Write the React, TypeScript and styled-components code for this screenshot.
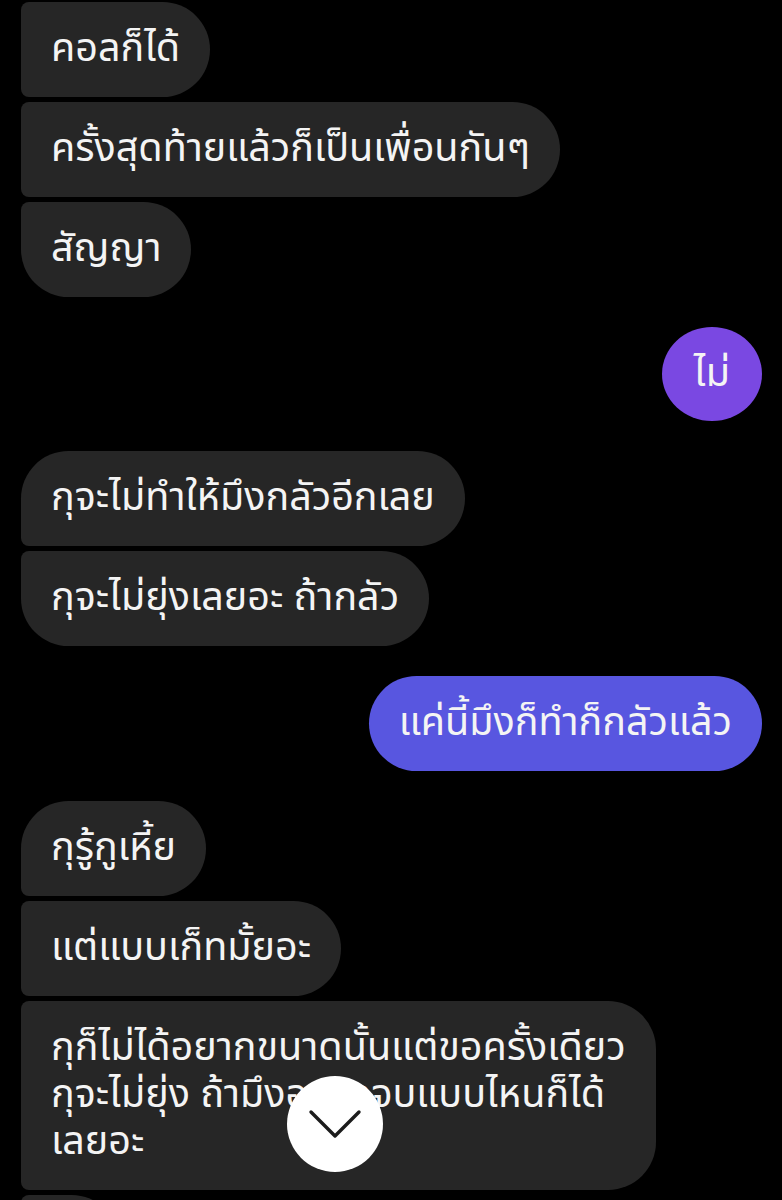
import React from "react";
import styled, { createGlobalStyle, css } from "styled-components";

const Global = createGlobalStyle`
  html, body {
    margin: 0;
    padding: 0;
    background: #000;
    overflow: hidden;
  }
  body {
    font-family: "Noto Sans Thai", "Noto Sans", "DejaVu Sans", sans-serif;
  }
`;

const Screen = styled.div`
  position: relative;
  width: 782px;
  height: 1200px;
  background: #000;
  overflow: hidden;
`;

const Thread = styled.div`
  display: flex;
  flex-direction: column;
  gap: 30px;
  padding: 2px 20px 0 21px;
`;

const Group = styled.div<{ $side: "in" | "out" }>`
  display: flex;
  flex-direction: column;
  gap: 5px;
  align-items: ${(p) => (p.$side === "in" ? "flex-start" : "flex-end")};
`;

type Pos = "first" | "middle" | "last" | "single";

const BIG = 48;
const SMALL = 8;

const Bubble = styled.div<{ $side: "in" | "out"; $pos: Pos; $bg: string }>`
  box-sizing: border-box;
  min-width: 95px;
  max-width: 700px;
  padding: 24px 30px;
  font-size: 39.5px;
  line-height: 47px;
  color: #f4f4f4;
  background: ${(p) => p.$bg};
  white-space: pre-line;
  text-align: left;
  ${(p) => {
    const top = p.$pos === "first" || p.$pos === "single" ? BIG : SMALL;
    const bottom = p.$pos === "last" || p.$pos === "single" ? BIG : SMALL;
    return p.$side === "in"
      ? css`
          border-radius: ${top}px ${BIG}px ${BIG}px ${bottom}px;
        `
      : css`
          border-radius: ${BIG}px ${top}px ${bottom}px ${BIG}px;
        `;
  }}
`;

const RoundBubble = styled(Bubble)`
  min-width: 0;
  width: 100px;
  height: 94px;
  padding: 0;
  display: flex;
  align-items: center;
  justify-content: center;
  border-radius: 50%;
`;

const ScrollDown = styled.button`
  position: absolute;
  left: 287px;
  top: 1076px;
  width: 96px;
  height: 96px;
  border: none;
  border-radius: 50%;
  background: #ffffff;
  display: flex;
  align-items: center;
  justify-content: center;
  padding: 0;
  cursor: pointer;
`;

const GRAY = "#262626";

type Msg = { text: string; pos: Pos };

const groups: { side: "in" | "out"; bg: string; msgs: Msg[]; round?: boolean }[] = [
  {
    side: "in",
    bg: GRAY,
    msgs: [
      { text: "คอลก็ได้", pos: "middle" },
      { text: "ครั้งสุดท้ายแล้วก็เป็นเพื่อนกันๆ", pos: "middle" },
      { text: "สัญญา", pos: "last" },
    ],
  },
  { side: "out", bg: "#7a48e2", msgs: [{ text: "ไม่", pos: "single" }], round: true },
  {
    side: "in",
    bg: GRAY,
    msgs: [
      { text: "กุจะไม่ทำให้มึงกลัวอีกเลย", pos: "first" },
      { text: "กุจะไม่ยุ่งเลยอะ ถ้ากลัว", pos: "last" },
    ],
  },
  { side: "out", bg: "#5856e0", msgs: [{ text: "แค่นี้มึงก็ทำก็กลัวแล้ว", pos: "single" }] },
  {
    side: "in",
    bg: GRAY,
    msgs: [
      { text: "กุรู้กูเหี้ย", pos: "first" },
      { text: "แต่แบบเก็ทมั้ยอะ", pos: "middle" },
      {
        text: "กุก็ไม่ได้อยากขนาดนั้นแต่ขอครั้งเดียว\nกุจะไม่ยุ่ง ถ้ามึงอยากจบแบบไหนก็ได้\nเลยอะ",
        pos: "middle",
      },
      { text: "นะ", pos: "middle" },
    ],
  },
];

export default function App() {
  return (
    <Screen>
      <Global />
      <Thread>
        {groups.map((g, gi) => (
          <Group key={gi} $side={g.side}>
            {g.msgs.map((m, mi) =>
              g.round ? (
                <RoundBubble key={mi} $side={g.side} $pos={m.pos} $bg={g.bg}>
                  {m.text}
                </RoundBubble>
              ) : (
                <Bubble key={mi} $side={g.side} $pos={m.pos} $bg={g.bg}>
                  {m.text}
                </Bubble>
              )
            )}
          </Group>
        ))}
      </Thread>
      <ScrollDown aria-label="scroll down">
        <svg width="54" height="30" viewBox="0 0 54 30" fill="none">
          <path
            d="M3 3 L27 27 L51 3"
            stroke="#1c1c1c"
            strokeWidth="3.4"
            strokeLinecap="round"
            strokeLinejoin="round"
          />
        </svg>
      </ScrollDown>
    </Screen>
  );
}
